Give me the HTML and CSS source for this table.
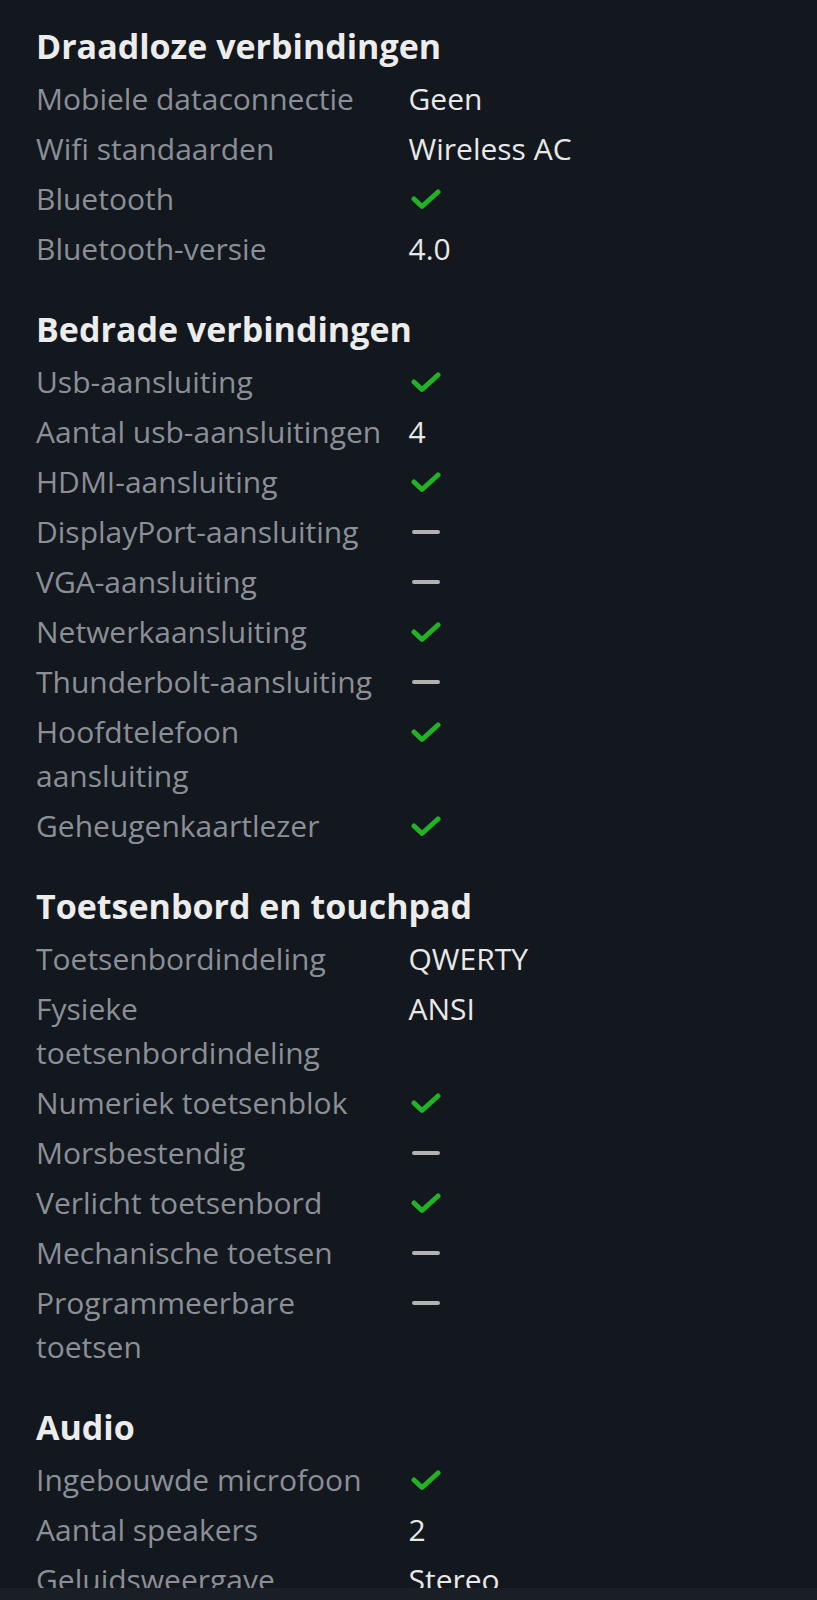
FILE: index.html
```html
<!DOCTYPE html>
<html lang="nl">
<head>
  <meta charset="UTF-8">
  <title>Specificaties - Aansluitingen</title>
  <link rel="stylesheet" href="styles.css">
</head>
<body>
  <div class="specs">
    <div class="spec-group">
      <h2>Draadloze verbindingen</h2>
      <dl>
        <div class="row"><dt>Mobiele dataconnectie</dt><dd>Geen</dd></div>
        <div class="row"><dt>Wifi standaarden</dt><dd>Wireless AC</dd></div>
        <div class="row"><dt>Bluetooth</dt><dd><span class="ja"></span></dd></div>
        <div class="row"><dt>Bluetooth-versie</dt><dd>4.0</dd></div>
      </dl>
    </div>
    <div class="spec-group">
      <h2>Bedrade verbindingen</h2>
      <dl>
        <div class="row"><dt>Usb-aansluiting</dt><dd><span class="ja"></span></dd></div>
        <div class="row"><dt>Aantal usb-aansluitingen</dt><dd>4</dd></div>
        <div class="row"><dt>HDMI-aansluiting</dt><dd><span class="ja"></span></dd></div>
        <div class="row"><dt>DisplayPort-aansluiting</dt><dd><span class="nee"></span></dd></div>
        <div class="row"><dt>VGA-aansluiting</dt><dd><span class="nee"></span></dd></div>
        <div class="row"><dt>Netwerkaansluiting</dt><dd><span class="ja"></span></dd></div>
        <div class="row"><dt>Thunderbolt-aansluiting</dt><dd><span class="nee"></span></dd></div>
        <div class="row"><dt>Hoofdtelefoon aansluiting</dt><dd><span class="ja"></span></dd></div>
        <div class="row"><dt>Geheugenkaartlezer</dt><dd><span class="ja"></span></dd></div>
      </dl>
    </div>
    <div class="spec-group">
      <h2>Toetsenbord en touchpad</h2>
      <dl>
        <div class="row"><dt>Toetsenbordindeling</dt><dd>QWERTY</dd></div>
        <div class="row"><dt>Fysieke toetsenbordindeling</dt><dd>ANSI</dd></div>
        <div class="row"><dt>Numeriek toetsenblok</dt><dd><span class="ja"></span></dd></div>
        <div class="row"><dt>Morsbestendig</dt><dd><span class="nee"></span></dd></div>
        <div class="row"><dt>Verlicht toetsenbord</dt><dd><span class="ja"></span></dd></div>
        <div class="row"><dt>Mechanische toetsen</dt><dd><span class="nee"></span></dd></div>
        <div class="row"><dt>Programmeerbare toetsen</dt><dd><span class="nee"></span></dd></div>
      </dl>
    </div>
    <div class="spec-group">
      <h2>Audio</h2>
      <dl>
        <div class="row"><dt>Ingebouwde microfoon</dt><dd><span class="ja"></span></dd></div>
        <div class="row"><dt>Aantal speakers</dt><dd>2</dd></div>
        <div class="row"><dt>Geluidsweergave</dt><dd>Stereo</dd></div>
      </dl>
    </div>
  </div>
  <div class="bottom-bar"></div>
  <script>
    // vinkje als inline svg
    const vinkje = '<svg width="32" height="22" viewBox="0 0 32 22"><path d="M5 11 L13 18.5 L29 4" fill="none" stroke="#20b424" stroke-width="5" stroke-linecap="round" stroke-linejoin="round"/></svg>';
    document.querySelectorAll(".ja").forEach(el => el.innerHTML = vinkje);
  </script>
</body>
</html>
```

FILE: styles.css
```css
body { margin: 0; background-color: #13171e; color: #e6e6e6; font-family: "Open Sans", sans-serif; overflow: hidden; }
.specs { padding: 23px 36px 0; }
.spec-group { margin-bottom: 32px; }
.spec-group h2 { font-size: 34px; line-height: 46px; font-weight: 700; color: #ececec; margin: 0 0 5px; }
dl { margin: 0; }
.row { display: grid; grid-template-columns: 1fr 1fr; padding: 3px 0; font-size: 30px; line-height: 44px; }
dt { color: #8b8f96; padding-right: 22px; }
dd { margin: 0; color: #e8e8e8; }
.ja { display: inline-flex; align-items: center; height: 44px; vertical-align: top; }
.nee { display: inline-block; width: 28px; height: 4px; border-radius: 2px; background-color: #b2b2b2; vertical-align: top; margin: 20px 0 0 3px; }
.bottom-bar { position: fixed; left: 0; right: 0; bottom: 0; height: 12px; background-color: #1a1e26; }
```
